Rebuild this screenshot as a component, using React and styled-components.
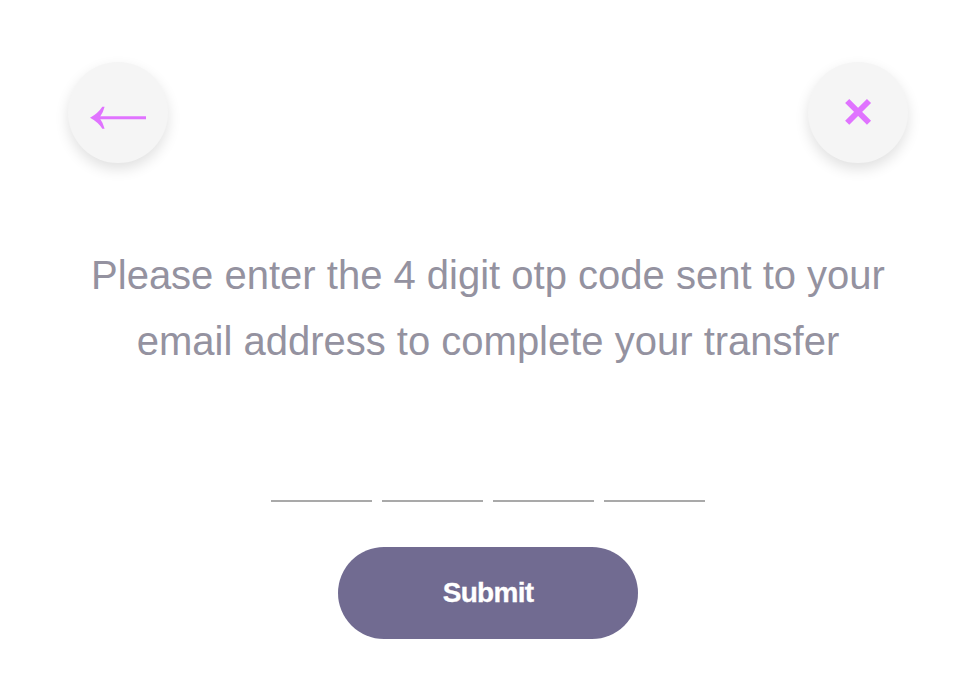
import React from "react";
import styled, { createGlobalStyle } from "styled-components";

const Global = createGlobalStyle`
  * { box-sizing: border-box; }
  body { margin: 0; background: #fff; font-family: "Liberation Sans", Arial, sans-serif; }
`;
const Page = styled.main`
  width: 974px; height: 674px; display: flex; flex-direction: column; align-items: center;
  padding-top: 62px; overflow: hidden;
`;
const Header = styled.header`
  width: 840px; margin-left: 2px; display: flex; justify-content: space-between;
`;
const RoundButton = styled.button`
  width: 100px; height: 101px; border: 0; padding: 0; border-radius: 50%;
  background: #f5f5f5; color: #e073ff; box-shadow: 0 6px 14px rgba(0,0,0,0.12);
  svg { display: block; }
`;
const Message = styled.p`
  margin: 79px 0 0; padding-left: 2px; width: 974px; text-align: center; color: #9492a0;
  font-size: 40px; line-height: 66px; white-space: pre-line;
`;
const Code = styled.div`
  display: flex; gap: 10px; margin: 68px 0 0 2px;
`;
const Digit = styled.input`
  width: 101px; height: 60px; border: 0; border-bottom: 2px solid #a9a9a9; padding: 0;
  background: transparent; text-align: center; font-size: 32px; outline: none;
`;
const Submit = styled.button`
  width: 300px; height: 92px; margin: 45px 0 0 2px; border: 0; border-radius: 46px;
  background: #716b91; color: #fff; font: bold 28px "Liberation Sans", Arial, sans-serif;
  letter-spacing: -0.7px; flex-shrink: 0; -webkit-text-stroke: 0.3px #fff;
`;

export default function App() {
  return (
    <Page>
      <Global />
      <Header>
        <RoundButton aria-label="Back">
          <svg width="100" height="101" viewBox="0 0 100 101" fill="none">
            <path d="M78 55.8H28" stroke="currentColor" strokeWidth="3" />
            <path d="M22 55.8Q30 51.5 34.3 44.8H36.6Q35.5 50 31.5 55.8Q35.5 61.5 36.6 66.8H34.3Q30 60 22 55.8Z" fill="currentColor" />
          </svg>
        </RoundButton>
        <RoundButton aria-label="Close">
          <svg width="100" height="101" viewBox="0 0 100 101" fill="none">
            <path d="M39.2 39L61 60.8M61 39L39.2 60.8" stroke="currentColor" strokeWidth="5.8" />
          </svg>
        </RoundButton>
      </Header>
      <Message>{"Please enter the 4 digit otp code sent to your\nemail address to complete your transfer"}</Message>
      <Code>
        {[1, 2, 3, 4].map((n) => <Digit key={n} aria-label={`Digit ${n}`} maxLength={1} />)}
      </Code>
      <Submit>Submit</Submit>
    </Page>
  );
}
